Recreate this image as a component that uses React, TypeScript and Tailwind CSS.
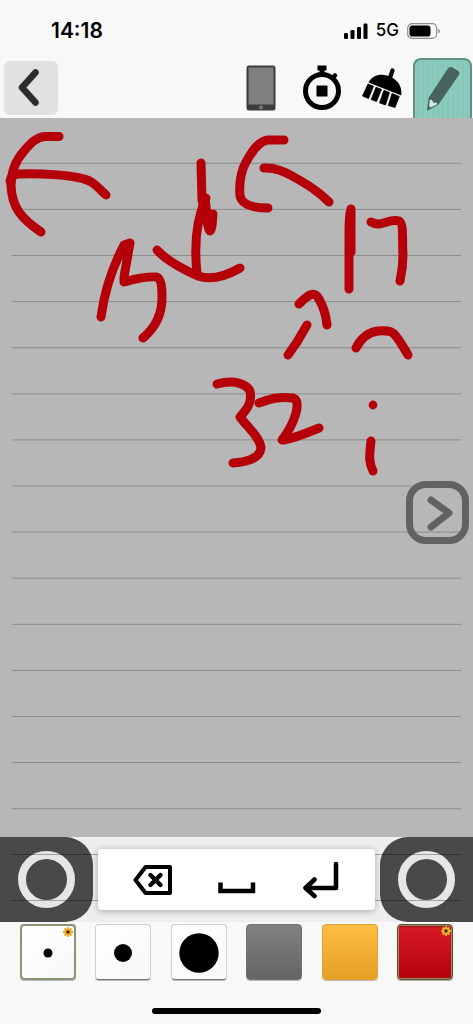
import React, { useState } from 'react';

const STROKES = [
  'M59 136.500H45C36 137 30 144 24 151C15 161 11 174 11 186C12 208 22 219 41 232',
  'M10 181Q11 175 18 174C40 173 70 175 84 179C93 181 97 187 106 195',
  'M201 163L202 200L208 226Q210 236 212 226L213 214L208 224L205 198',
  'M206 198C197 218 194 245 197 273',
  'M157 250C166 260 180 268 198 276C212 281 226 276 240 268',
  'M101 317C104 294 112 268 124 245L130 243L124 277V282C132 280 144 276 156 277C161 278 162 286 162 298C162 314 156 327 143 338',
  'M284 140H268C258 141 251 153 246 162C240 173 239 184 240 196C242 204 252 208 268 208',
  'M264 168C275 167 284 171 294 177C308 185 318 191 329 202',
  'M351 209C349 214 349 225 349 235V289M351 212V252',
  'M371 222C382 228 388 218 399 221C404 223 402 242 403 255C403 267 402 272 400 281',
  'M299 304C308 295 314 290 319 299C323 306 326 314 327 325',
  'M307 325L297 342L288 355',
  'M356 348C362 336 370 332 378 331C394 330 394 331 408 355',
  'M217 384C236 379 247 385 250 391C252 401 249 407 240 417C248 428 260 437 261 448C260 457 250 462 233 463',
  'M259 403C268 400 277 396 293 398C302 401 295 423 282 440Q290 440 319 428',
  'M371 441C369 458 369 463 373 471',
];

const RULES = Array.from({ length: 15 }, (_, i) => 163.3 + i * 46.1);

type Swatch = { label: string; kind: 'pen' | 'color'; dot?: number; fill?: string; gear?: boolean };

const SWATCHES: Swatch[] = [
  { label: 'Thin pen', kind: 'pen', dot: 4.7, gear: true },
  { label: 'Medium pen', kind: 'pen', dot: 9 },
  { label: 'Thick pen', kind: 'pen', dot: 19.7 },
  { label: 'Gray', kind: 'color', fill: 'bg-linear-to-b from-[#828282] to-[#646464] border-[#707070]' },
  { label: 'Yellow', kind: 'color', fill: 'bg-linear-to-b from-[#febd43] to-[#e5a023] border-[#dda236]' },
  { label: 'Red', kind: 'color', fill: 'bg-linear-to-b from-[#da1a28] to-[#b30009] border-[#5d5032]', gear: true },
];

const StatusBar: React.FC = () => (
  <div className="flex h-[58px] items-center justify-between pt-1 pr-8 pl-[51px] font-['Inter',sans-serif] text-black">
    <span className="text-[21px] font-semibold">14:18</span>
    <div className="flex items-center gap-2">
      <svg width="24" height="16" viewBox="0 0 24 16" aria-hidden="true">
        <rect x="0" y="10" width="4" height="6" rx="1.3" />
        <rect x="6.5" y="7" width="4" height="9" rx="1.3" />
        <rect x="13" y="4" width="4" height="12" rx="1.3" />
        <rect x="19.5" y="0.5" width="4" height="15.5" rx="1.3" />
      </svg>
      <span className="text-[17px] font-medium">5G</span>
      <svg width="34" height="16" viewBox="0 0 34 16" aria-hidden="true">
        <rect x="0.7" y="0.7" width="29" height="14.6" rx="4.5" fill="none" stroke="#8d8d8d" strokeWidth="1.2" />
        <rect x="2.5" y="2.5" width="21" height="11" rx="2.8" />
        <path d="M31.3 5.7C33.4 6.3 33.4 9.7 31.3 10.3Z" fill="#8d8d8d" />
      </svg>
    </div>
  </div>
);

const ToolBar: React.FC = () => (
  <div className="flex h-[60px] items-center pr-px pl-1">
    <button aria-label="Back" className="flex size-[54px] items-center justify-center rounded-md bg-[#e1e1e1]">
      <svg width="54" height="54" viewBox="0 0 54 54" fill="none" stroke="#2d2d2d" strokeWidth="6.500" strokeLinecap="round" strokeLinejoin="round">
        <path d="M31.500 11.500L18 26.500L31.500 41.500" />
      </svg>
    </button>
    <div className="ml-auto flex">
      <button aria-label="Device" className="flex h-[60px] w-[61px] items-center justify-center">
        <svg width="30" height="46" viewBox="0 0 30 46">
          <rect x="0.5" y="0.5" width="29" height="45" rx="2.5" fill="#3d3d3d" />
          <rect x="2.5" y="2.5" width="25" height="37" fill="#808080" />
          <circle cx="15" cy="42.4" r="2" fill="#777" />
        </svg>
      </button>
      <button aria-label="Timer" className="flex h-[60px] w-[61px] items-center justify-center">
        <svg width="40" height="46" viewBox="0 0 40 46">
          <circle cx="20" cy="26" r="16.5" fill="none" stroke="#000" strokeWidth="5" />
          <path d="M15.5 0.5H24.5V5.5H22.5V10H17.5V5.5H15.5Z" />
          <path d="M30.5 13L33 10.5" stroke="#000" strokeWidth="4.5" strokeLinecap="round" />
          <rect x="14.5" y="20.5" width="11" height="11" rx="0.5" />
        </svg>
      </button>
      <button aria-label="Clear" className="flex h-[60px] w-[61px] items-center justify-center">
        <svg width="44" height="44" viewBox="361 66 44 44">
          <path d="M392.500 70.500L389.500 79" stroke="#000" strokeWidth="4.200" strokeLinecap="round" />
          <path d="M368.500 82.500C372 76 379 73.500 387 75.500C396 78 402.500 85 401.300 95.500Z" />
          <path d="M368 84L373.500 86.200L368.500 98.500L362.500 96ZM376 87.200L381.500 89.400L376.500 101.500L371.200 99.500ZM384 90.300L389.500 92.500L385.500 105L379.500 102.800ZM392 93.500L399.300 96.500L395 107.500L388.300 105.500Z" stroke="#000" strokeWidth="0.800" strokeLinejoin="round" />
        </svg>
      </button>
      <button aria-label="Draw" className="h-[60px] w-[59px] overflow-hidden rounded-t-lg border-2 border-b-0 border-[#5f8f86] bg-[#8bcbbd]">
        <svg width="55" height="58" viewBox="415 60 55 58">
          <path d="M418 60V118M423 60V118M428 60V118M433 60V118M438 60V118M443 60V118M448 60V118M453 60V118M458 60V118M463 60V118M468 60V118" stroke="#83c3b5" strokeWidth="1" />
          <path d="M447.500 69Q449.500 66 452.500 67.500L457.500 70.500Q460.500 72.500 458.500 75.500L438.500 104.500L427 111L428.500 98Z" fill="#48635c" />
          <path d="M430 99.500C431.800 99.500 433 101 433.500 103C435 102 436.500 102.500 437.500 104L431 107.500L429 106Z" fill="#cdeae2" />
        </svg>
      </button>
    </div>
  </div>
);

const Gear: React.FC = () => (
  <svg className="absolute top-0 right-0 size-3" viewBox="-6 -6 12 12">
    <path d="M0 -5V5M-5 0H5M-3.500 -3.500L3.500 3.500M3.500 -3.500L-3.500 3.500" stroke="#eba71f" strokeWidth="1.8" />
    <circle r="3" fill="#b97d12" stroke="#f4b52e" strokeWidth="1.6" />
    <circle r="1.300" fill="#352200" />
  </svg>
);

const PadHandle: React.FC<{ label: string; side: string }> = ({ label, side }) => (
  <button aria-label={label} className={`flex w-[93px] items-center justify-center bg-[#4b4947] ${side}`}>
    <span className="size-[57px] rounded-full border-8 border-[#e6e6e4]" />
  </button>
);

const KeyRow: React.FC = () => (
  <div className="relative flex h-[85px] justify-between bg-[#eeeeee]">
    <PadHandle label="Left pad" side="rounded-r-[28px]" />
    <div className="z-10 mx-[5px] my-3 flex flex-1 items-center justify-around rounded bg-white px-3 shadow-[0_1px_7px_rgba(0,0,0,0.3)]">
      <button aria-label="Delete">
        <svg width="40" height="32" viewBox="0 0 40 32" fill="none" stroke="#000" strokeWidth="4" strokeLinejoin="round">
          <path d="M12.500 3H37V29H12.500L2.500 16Z" />
          <path d="M17.500 11L27.500 21M27.500 11L17.500 21" strokeLinecap="round" strokeWidth="4.400" />
        </svg>
      </button>
      <button aria-label="Space" className="pt-4">
        <svg width="38" height="12" viewBox="0 0 38 12" fill="none" stroke="#000" strokeWidth="4.500">
          <path d="M2.500 0.500V9H35V0.500" />
        </svg>
      </button>
      <button aria-label="Enter">
        <svg width="38" height="38" viewBox="0 0 38 38" fill="none" stroke="#000" strokeWidth="4.600" strokeLinecap="round" strokeLinejoin="round">
          <path d="M34 3V27H4M12.500 18.500L3.500 27L12.500 35" />
        </svg>
      </button>
    </div>
    <PadHandle label="Right pad" side="rounded-l-[28px]" />
    {/* the last two ruled lines of the sheet run on under the pads */}
    <div className="pointer-events-none absolute inset-x-3 top-[17px] h-[47px] border-y border-black/30" />
  </div>
);

const App: React.FC = () => {
  const [pen, setPen] = useState('Thin pen');
  const [color, setColor] = useState('Red');

  return (
    <div className="flex min-h-screen flex-col bg-[#f8f8f8]">
      <header>
        <StatusBar />
        <ToolBar />
      </header>

      <main className="relative bg-[#b7b7b7]">
        <svg className="block w-full" viewBox="0 118 473 719" fill="none">
          {RULES.map((y) => (
            <path key={y} d={`M12 ${y}H461`} stroke="#8b8b8b" strokeWidth="1" />
          ))}
          <g stroke="#b5000a" strokeWidth="9" strokeLinecap="round" strokeLinejoin="round">
            {STROKES.map((d) => (
              <path key={d} d={d} />
            ))}
          </g>
          <circle cx="373" cy="405" r="4.400" fill="#b5000a" />
        </svg>
        <button
          aria-label="Next"
          className="absolute top-[363px] right-1 flex size-[63px] items-center justify-center rounded-[20px] border-[7px] border-[#626262]"
        >
          <svg width="49" height="49" viewBox="0 0 49 49" fill="none" stroke="#626262" strokeWidth="7" strokeLinecap="round" strokeLinejoin="round">
            <path d="M18 12L36 25L18 39" />
          </svg>
        </button>
      </main>

      <KeyRow />

      <div className="flex justify-between px-5 pt-[2px]">
        {SWATCHES.map((s) => {
          const active = s.kind === 'pen' ? s.label === pen : s.label === color;
          return (
            <button
              key={s.label}
              aria-label={s.label}
              aria-pressed={active}
              onClick={() => (s.kind === 'pen' ? setPen(s.label) : setColor(s.label))}
              className={`relative size-14 rounded ${
                s.kind === 'color'
                  ? `border ${s.fill} ${active ? 'shadow-[inset_0_0_0_1px_#a08a66,inset_0_1px_1px_1px_#8c1218,0_1px_1px_rgba(0,0,0,0.3)]' : 'shadow-[0_1px_0_rgba(0,0,0,0.25)]'}`
                  : `bg-linear-to-br from-white to-[#f8f8f8] ${active ? 'border-2 border-[#879577]' : 'border border-[#cfcfcf] border-b-[#777777]'} shadow-[0_1px_0_rgba(0,0,0,0.25)]`
              }`}
            >
              {s.dot && (
                <svg className="size-full" viewBox="-27 -27 54 54">
                  <circle r={s.dot} cy="1" />
                </svg>
              )}
              {s.gear && <Gear />}
            </button>
          );
        })}
      </div>

      <div className="mt-auto mb-[10px] h-[6px] w-[169px] self-center rounded-full bg-black" />
    </div>
  );
};

export default App;
